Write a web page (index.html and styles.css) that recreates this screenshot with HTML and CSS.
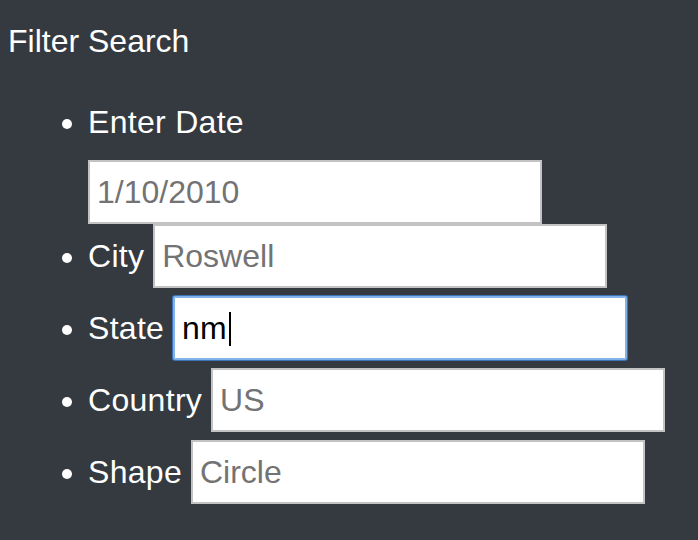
FILE: index.html
```html
<!DOCTYPE html>
<html lang="en">
<head>
<meta charset="utf-8">
<title>Filter Search</title>
<link rel="stylesheet" href="styles.css">
</head>
<body>
<div class="panel">
  <h5 class="panel-title">Filter Search</h5>
  <ul class="filters">
    <li class="filter filter-stacked">
      <label class="filter-label" for="datetime">Enter Date</label>
      <input class="filter-input" id="datetime" type="text" placeholder="1/10/2010">
    </li>
    <li class="filter">
      <label class="filter-label" for="city">City</label>
      <input class="filter-input" id="city" type="text" placeholder="Roswell">
    </li>
    <li class="filter">
      <label class="filter-label" for="state">State</label>
      <span class="field-wrap"><input class="filter-input is-focused" id="state" type="text" value="nm"><span class="caret"></span></span>
    </li>
    <li class="filter">
      <label class="filter-label" for="country">Country</label>
      <input class="filter-input" id="country" type="text" placeholder="US">
    </li>
    <li class="filter">
      <label class="filter-label" for="shape">Shape</label>
      <input class="filter-input" id="shape" type="text" placeholder="Circle">
    </li>
  </ul>
</div>
</body>
</html>
```
FILE: styles.css
```css
html, body {
  margin: 0;
  background: #343a40;
}
body {
  font-family: "Liberation Sans", Arial, sans-serif;
  font-size: 32px;
  line-height: 37px;
  color: #fff;
}
.panel {
  padding: 23px 8px 20px 8px;
}
.panel-title {
  margin: 0;
  font-size: 32px;
  font-weight: 400;
  line-height: 37px;
}
.filters {
  margin: 44px 0 0;
  padding-left: 80px;
  list-style: disc;
}
.filter {
  margin-bottom: 8px;
}
.filter-stacked {
  margin-bottom: 0;
}
.filter-stacked .filter-label {
  display: block;
  margin-bottom: 19px;
}
.filter-label {
  letter-spacing: 0.3px;
}
.filter-input {
  box-sizing: border-box;
  width: 454px;
  height: 64px;
  margin: 0;
  padding: 0 7px;
  border: 2px solid #c3c3c3;
  border-radius: 0;
  background: #fff;
  font-family: "Liberation Sans", Arial, sans-serif;
  font-size: 32px;
  color: #000;
  outline: none;
}
.filter-input::placeholder {
  color: #737373;
  opacity: 1;
}
.field-wrap {
  position: relative;
  display: inline-block;
}
.filter-input.is-focused {
  border-color: #82b2ea;
  box-shadow: 0 0 0 1px #3d72b5;
  border-radius: 2px;
}
.caret {
  position: absolute;
  left: 56px;
  top: 16px;
  width: 2px;
  height: 34px;
  background: #000;
}
```
